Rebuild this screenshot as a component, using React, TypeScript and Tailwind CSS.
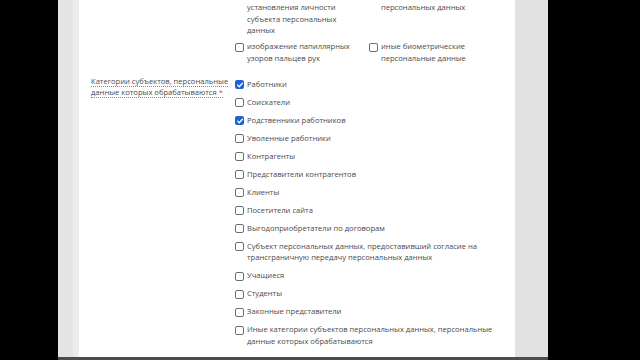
const categories: { label: string; checked?: boolean }[] = [
  { label: "Работники", checked: true },
  { label: "Соискатели" },
  { label: "Родственники работников", checked: true },
  { label: "Уволенные работники" },
  { label: "Контрагенты" },
  { label: "Представители контрагентов" },
  { label: "Клиенты" },
  { label: "Посетители сайта" },
  { label: "Выгодоприобретатели по договорам" },
  {
    label:
      "Субъект персональных данных, предоставивший согласие на трансграничную передачу персональных данных",
  },
  { label: "Учащиеся" },
  { label: "Студенты" },
  { label: "Законные представители" },
  {
    label:
      "Иные категории субъектов персональных данных, персональные данные которых обрабатываются",
  },
];

function Box({ checked }: { checked?: boolean }) {
  if (checked) {
    return (
      <span className="mt-[1.5px] flex h-[9px] w-[9px] shrink-0 items-center justify-center rounded-[2px] bg-[#1e63d6]">
        <svg viewBox="0 0 10 10" className="h-[8px] w-[8px]">
          <path d="M2 5.2l2 2 4-4.4" fill="none" stroke="white" strokeWidth={1.6} strokeLinecap="round" strokeLinejoin="round" />
        </svg>
      </span>
    );
  }
  return <span className="mt-[1.5px] h-[9px] w-[9px] shrink-0 rounded-[2px] border border-[#6f6f6f] bg-white" />;
}

function Option({
  label,
  checked,
  box = true,
  className = "",
}: {
  label: string;
  checked?: boolean;
  box?: boolean;
  className?: string;
}) {
  return (
    <div className={`flex items-start gap-[3px] ${className}`}>
      {box ? <Box checked={checked} /> : <span className="w-[9px] shrink-0" />}
      <span>{label}</span>
    </div>
  );
}

export default function App() {
  return (
    <div
      className="flex h-[360px] w-[640px] overflow-hidden bg-black text-[7.6px] leading-[11.5px] text-[#4a4a4a]"
      style={{ fontFamily: '"Open Sans", "Noto Sans", sans-serif' }}
    >
      <div className="w-[58px] shrink-0 bg-black" />
      <div className="flex w-[490px] shrink-0 flex-col">
        <div className="flex h-[357px]">
          <div className="w-[15px] bg-[#e4e4e4]" />
          <div className="w-[6px] bg-[#ececec]" />
          {/* Page */}
          <div className="w-[436px] overflow-hidden bg-white pl-[12px] pt-[2px]">
            {/* Biometric options, continued */}
            <div className="ml-[144px] grid w-[270px] grid-cols-[134px_1fr] gap-y-[4.5px]">
              <Option box={false} className="pr-[14px]" label="установления личности субъекта персональных данных" />
              <Option box={false} label="персональных данных" />
              <Option className="pr-[14px]" label="изображение папиллярных узоров пальцев рук" />
              <Option label="иные биометрические персональные данные" />
            </div>

            {/* Categories */}
            <div className="mt-[11.5px] flex">
              <div className="w-[144px] shrink-0 whitespace-nowrap">
                <span className="border-b border-dotted border-[#8a8a8a] leading-[11px]">
                  Категории субъектов, персональные
                </span>
                <br />
                <span className="border-b border-dotted border-[#8a8a8a] leading-[11px]">
                  данные которых обрабатываются <span className="text-[#e0463c]">*</span>
                </span>
              </div>
              <div className="mt-[3px] flex w-[268px] flex-col gap-y-[6.5px]">
                {categories.map((c) => (
                  <Option key={c.label} label={c.label} checked={c.checked} />
                ))}
              </div>
            </div>
          </div>
          <div className="w-[33px] bg-[#e2e2e2]" />
        </div>
        <div className="h-[3px] bg-[#4d4d4d]" />
      </div>
      <div className="flex-1 bg-black" />
    </div>
  );
}
